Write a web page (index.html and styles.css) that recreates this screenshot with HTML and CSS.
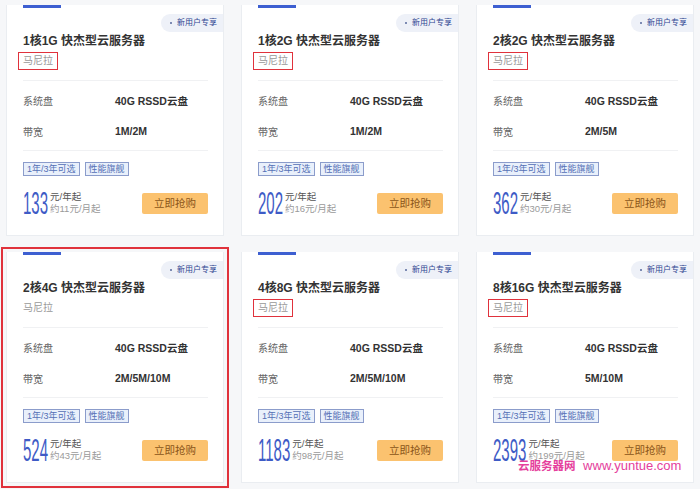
FILE: index.html
```html
<!DOCTYPE html>
<html lang="zh-CN">
<head>
<meta charset="utf-8" />
<title>快杰型云服务器</title>
<link rel="stylesheet" href="styles.css">
</head>
<body>
<div class="page">
	<div class="grid">
		<div class="card">
			<div class="bar"></div>
			<div class="badge"><i></i>新用户专享</div>
			<h3>1核1G 快杰型云服务器</h3>
			<div class="region"><span class="mark">马尼拉</span></div>
			<div class="specs">
				<div class="row"><span class="k">系统盘</span><span class="v">40G RSSD云盘</span></div>
				<div class="row"><span class="k">带宽</span><span class="v">1M/2M</span></div>
			</div>
			<div class="tags"><span>1年/3年可选</span><span>性能旗舰</span></div>
			<div class="foot">
				<div class="price"><b>133</b><p><span>元/年起</span><em>约11元/月起</em></p></div>
				<a class="buy" href="javascript:;">立即抢购</a>
			</div>
		</div>
		<div class="card">
			<div class="bar"></div>
			<div class="badge"><i></i>新用户专享</div>
			<h3>1核2G 快杰型云服务器</h3>
			<div class="region"><span class="mark">马尼拉</span></div>
			<div class="specs">
				<div class="row"><span class="k">系统盘</span><span class="v">40G RSSD云盘</span></div>
				<div class="row"><span class="k">带宽</span><span class="v">1M/2M</span></div>
			</div>
			<div class="tags"><span>1年/3年可选</span><span>性能旗舰</span></div>
			<div class="foot">
				<div class="price"><b>202</b><p><span>元/年起</span><em>约16元/月起</em></p></div>
				<a class="buy" href="javascript:;">立即抢购</a>
			</div>
		</div>
		<div class="card">
			<div class="bar"></div>
			<div class="badge"><i></i>新用户专享</div>
			<h3>2核2G 快杰型云服务器</h3>
			<div class="region"><span class="mark">马尼拉</span></div>
			<div class="specs">
				<div class="row"><span class="k">系统盘</span><span class="v">40G RSSD云盘</span></div>
				<div class="row"><span class="k">带宽</span><span class="v">2M/5M</span></div>
			</div>
			<div class="tags"><span>1年/3年可选</span><span>性能旗舰</span></div>
			<div class="foot">
				<div class="price"><b>362</b><p><span>元/年起</span><em>约30元/月起</em></p></div>
				<a class="buy" href="javascript:;">立即抢购</a>
			</div>
		</div>
		<div class="card picked">
			<div class="bar"></div>
			<div class="badge"><i></i>新用户专享</div>
			<h3>2核4G 快杰型云服务器</h3>
			<div class="region"><span>马尼拉</span></div>
			<div class="specs">
				<div class="row"><span class="k">系统盘</span><span class="v">40G RSSD云盘</span></div>
				<div class="row"><span class="k">带宽</span><span class="v">2M/5M/10M</span></div>
			</div>
			<div class="tags"><span>1年/3年可选</span><span>性能旗舰</span></div>
			<div class="foot">
				<div class="price"><b>524</b><p><span>元/年起</span><em>约43元/月起</em></p></div>
				<a class="buy" href="javascript:;">立即抢购</a>
			</div>
		</div>
		<div class="card">
			<div class="bar"></div>
			<div class="badge"><i></i>新用户专享</div>
			<h3>4核8G 快杰型云服务器</h3>
			<div class="region"><span class="mark">马尼拉</span></div>
			<div class="specs">
				<div class="row"><span class="k">系统盘</span><span class="v">40G RSSD云盘</span></div>
				<div class="row"><span class="k">带宽</span><span class="v">2M/5M/10M</span></div>
			</div>
			<div class="tags"><span>1年/3年可选</span><span>性能旗舰</span></div>
			<div class="foot">
				<div class="price"><b>1183</b><p><span>元/年起</span><em>约98元/月起</em></p></div>
				<a class="buy" href="javascript:;">立即抢购</a>
			</div>
		</div>
		<div class="card">
			<div class="bar"></div>
			<div class="badge"><i></i>新用户专享</div>
			<h3>8核16G 快杰型云服务器</h3>
			<div class="region"><span class="mark">马尼拉</span></div>
			<div class="specs">
				<div class="row"><span class="k">系统盘</span><span class="v">40G RSSD云盘</span></div>
				<div class="row"><span class="k">带宽</span><span class="v">5M/10M</span></div>
			</div>
			<div class="tags"><span>1年/3年可选</span><span>性能旗舰</span></div>
			<div class="foot">
				<div class="price"><b>2393</b><p><span>元/年起</span><em>约199元/月起</em></p></div>
				<a class="buy" href="javascript:;">立即抢购</a>
			</div>
		</div>
	</div>
	<div class="watermark"><b>云服务器网</b> www.yuntue.com</div>
</div>
</body>
</html>
```

FILE: styles.css
```css
*{margin:0; padding:0; box-sizing:border-box;}
body{background:#f6f7f9; font-family:"Liberation Sans","Noto Sans CJK SC",sans-serif; color:#333;}
.page{position:relative; width:700px; height:489px; padding:5px 0 0 6px;}
.grid{display:grid; grid-template-columns:repeat(3,218px); column-gap:17px; row-gap:16px;}

.card{position:relative; height:231px; padding:0 15px 0 16px; background:#fff; border:1px solid #eaedf1; border-top:0;}
.card.picked{outline:2px solid #e0323c; outline-offset:3px;}
.card .bar{width:38px; height:3px; background:#3d5fd1;}
.card .badge{position:absolute; right:0; top:9px; height:18px; padding:0 6px 0 9px; border-radius:9px 0 0 9px; background:#eef1f8; color:#2f4591; font-size:8px; line-height:18px; display:flex; align-items:center;}
.card .badge i{width:2px; height:2px; background:#7d8bb3; margin-right:5px;}
.card h3{margin-top:23px; font-size:12px; line-height:20px; font-weight:bold; color:#333;}
.card .region{height:20px; display:flex; align-items:center; font-size:10px; color:#999;}
.card .region span{line-height:14px;}
.card .region .mark{padding:1px 4px; margin-left:-5px; border:1.5px solid #e0323c;}

.card .specs{margin-top:9px; padding:9px 0; border-top:1px solid #f0f1f3; border-bottom:1px solid #f0f1f3; display:flex; flex-direction:column; gap:11px;}
.card .row{display:flex; height:20px; align-items:center; font-size:10px;}
.card .row .k{width:92px; color:#666;}
.card .row .v{font-weight:bold; color:#333; font-size:10.5px;}

.card .tags{margin-top:11px; display:flex; gap:5px;}
.card .tags span{height:14px; padding:0 3px; border:1px solid #8b9ccb; background:#e9f0fb; color:#5571b6; font-size:9px; line-height:12px;}

.card .foot{margin-top:16px; display:flex; justify-content:space-between; align-items:center;}
.card .price{display:flex; align-items:flex-end; height:23px;}
.card .price b{display:inline-block; font-size:15px; line-height:11px; font-weight:normal; color:#3e5bc6; transform:scaleY(2.1); transform-origin:0 100%; margin-bottom:1px;}
.card .price p{margin-left:2px; display:flex; flex-direction:column; font-size:9.5px; line-height:12px;}
.card .price p span{color:#555;}
.card .price p em{font-style:normal; color:#9a9a9a;}
.card .buy{width:66px; height:21px; border-radius:2px; background:#fbc26f; color:#8a5519; font-size:10.5px; line-height:21px; text-align:center; text-decoration:none;}

.watermark{position:absolute; left:518px; top:456px; color:#e5409c; font-size:13px; line-height:20px; white-space:nowrap;}
.watermark b{font-size:11.5px; margin-right:4px;}
```
